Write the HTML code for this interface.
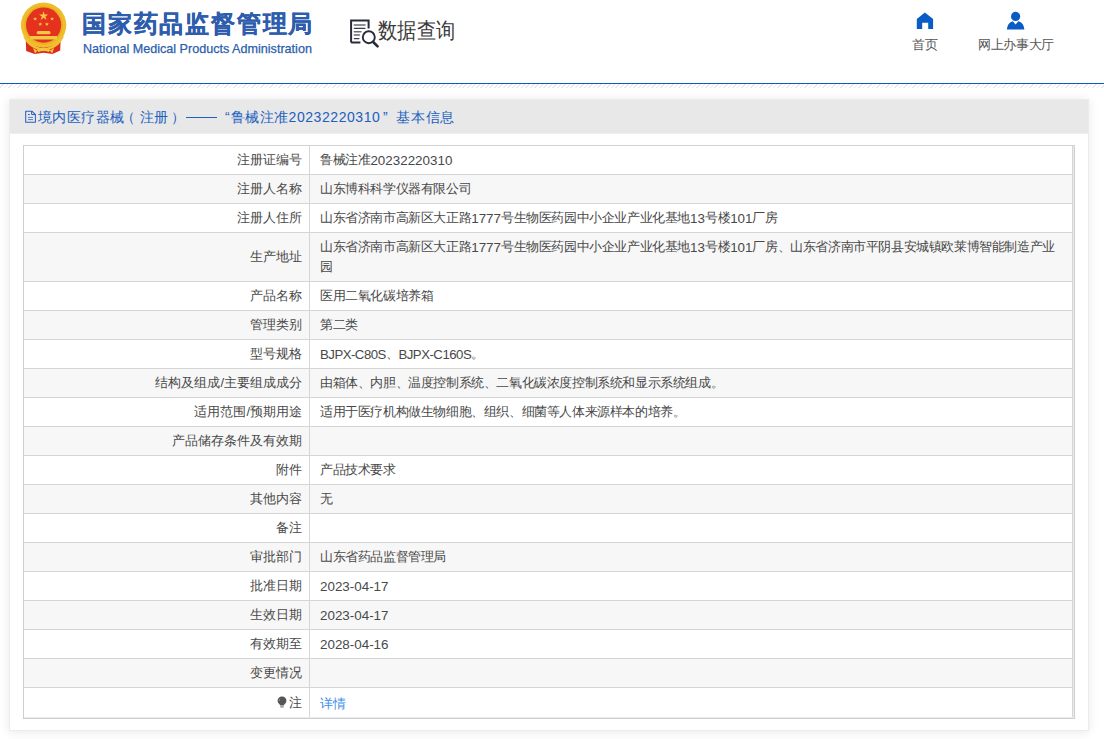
<!DOCTYPE html>
<html><head><meta charset="utf-8">
<style>
*{margin:0;padding:0;box-sizing:border-box}
html,body{width:1104px;height:739px;overflow:hidden;background:#fff;font-family:"Liberation Sans",sans-serif;color:#555}
#hdr{position:absolute;left:0;top:0;width:1104px;height:84px;border-bottom:1px solid #0a5cc2}
#hatch{position:absolute;left:0;top:84px;width:1104px;height:4px;background:repeating-linear-gradient(135deg,#fff 0,#fff 1.9px,#e9e9e9 2.0px,#e9e9e9 3.0px,#fff 3.18px)}
#emb{position:absolute;left:0;top:0;width:80px;height:60px}
#t1{position:absolute;left:82px;top:6.5px;font-size:24px;font-weight:bold;color:#2d5dac;line-height:34px;white-space:nowrap;letter-spacing:1.8px;-webkit-text-stroke:0.25px #2d5dac}
#t2{position:absolute;left:83px;top:42px;font-size:12.6px;color:#2a5eab;-webkit-text-stroke:0.25px #2a5eab;line-height:15px;white-space:nowrap}
#sq{position:absolute;left:350px;top:19px;width:30px;height:30px;overflow:visible}
#sqt{position:absolute;left:378px;top:16px;font-size:22px;color:#3a3a3a;line-height:30px;white-space:nowrap;transform:scaleX(0.875);transform-origin:0 0}
.nav{position:absolute;top:37px;font-size:13px;color:#555;line-height:16px;white-space:nowrap;letter-spacing:-0.35px}
#panel{position:absolute;left:9px;top:99px;width:1080px;height:632px;background:#fff;border:1px solid #ececec;box-shadow:0 1px 10px rgba(0,0,0,0.09)}
#ph{position:absolute;left:0;top:0;width:1078px;height:34px;border-bottom:1px solid #eceef3;background:#e8e8e8;color:#2060c0;font-size:14px;line-height:34px;white-space:nowrap}
#ph span.p{position:absolute;top:0;letter-spacing:0.4px}
#ph b{font-weight:normal;letter-spacing:0.55px}
#doc{position:absolute;left:15px;top:10px;width:12px;height:14px}
#tw{position:absolute;left:13px;top:45px;width:1052px;border:1px solid #cfcfcf;border-top-color:#d2d2d2;padding:0 1px 1px 0;background:#e9ebf1}
table{border-collapse:separate;border-spacing:0;table-layout:fixed;width:1049px;font-size:13px;color:#484848}
td{background:#fff;border-bottom:1px solid #d6d6d6;height:29px;line-height:20px;padding:0 10px 0 10px;letter-spacing:-0.4px;vertical-align:middle;white-space:nowrap}
td.l{width:286px;text-align:right;padding-right:7px;letter-spacing:0;border-right:1px solid #d6d6d6}
td.v{border-right:1px solid #d6d6d6}
tr.g td{background:#f7f7f7}
tr.tall td{height:49px}
tr.last td{height:29px;border-bottom:0}
#light{position:absolute;right:0;top:0;width:1px;height:100%;background:#e9ebf1}
#light2{position:absolute;left:0;bottom:0;width:100%;height:1px;background:#e9ebf1}
span.n{letter-spacing:0;font-size:13.4px;position:relative;top:1px}
span.m{letter-spacing:-0.5px;font-size:13.2px;position:relative;top:1px}
a{color:#3d8eea;text-decoration:none;position:relative;top:1.5px}
</style></head><body>
<div id="hdr">
  <svg id="emb" viewBox="0 0 80 60">
    <circle cx="43.6" cy="25.1" r="22.7" fill="#f0bd2a"/>
    <circle cx="43.6" cy="25.1" r="19.4" fill="#e8b020"/>
    <circle cx="43.6" cy="25.1" r="17.6" fill="#e4321f"/>
    <path d="M43.6 11.2 l1.1 3.3 h3.5 l-2.8 2.1 1.1 3.3 -2.9-2.1 -2.9 2.1 1.1-3.3 -2.8-2.1 h3.5z" fill="#f4c842"/>
    <path d="M35.1 17 l0.6 1.3 h1.4 l-1.1 .9 .4 1.4 -1.3-.8 -1.3 .8 .4-1.4 -1.1-.9 h1.4z" fill="#f4c842"/>
    <path d="M52.1 17 l0.6 1.3 h1.4 l-1.1 .9 .4 1.4 -1.3-.8 -1.3 .8 .4-1.4 -1.1-.9 h1.4z" fill="#f4c842"/>
    <path d="M40.3 22.2 l0.6 1.3 h1.4 l-1.1 .9 .4 1.4 -1.3-.8 -1.3 .8 .4-1.4 -1.1-.9 h1.4z" fill="#f4c842"/>
    <path d="M46.9 22.2 l0.6 1.3 h1.4 l-1.1 .9 .4 1.4 -1.3-.8 -1.3 .8 .4-1.4 -1.1-.9 h1.4z" fill="#f4c842"/>
    <path d="M37.5 31 H49.8 L50.8 33.2 L49.3 34.2 H38 L36.4 33.2 Z M30 35.9 H57.1 V39.5 H30 Z" fill="#f3c845"/>
    <path d="M25.8 40.5 Q34 47.5 43.6 47.5 Q53.2 47.5 60.6 40.5 L60.2 50.6 L52.5 54 L43.6 52.8 L34.6 54 L26.2 51 Z" fill="#dc2b1b"/>
    <path d="M24.5 36 A20.5 20.5 0 0 0 62.7 36" fill="none" stroke="#f0c233" stroke-width="2.6"/>
    <path d="M37 49.5 Q43.6 46 50.2 49.5 L49 52 Q43.6 50 38.2 52 Z M33 48 L37.5 50.5 L35 53.5 Z M54.2 48 L49.7 50.5 L52.2 53.5 Z" fill="#f2c53c"/>
  </svg>
  <div id="t1">国家药品监督管理局</div>
  <div id="t2">National Medical Products Administration</div>
  <svg id="sq" viewBox="0 0 30 30">
    <path d="M1.1 23.6 V1.4 H18.6 V9.4 M1.1 23.6 H10.4" fill="none" stroke="#2a2a3a" stroke-width="2"/>
    <path d="M4.3 6 H15 M4.3 12.7 H11 M4.3 16 H9.4" stroke="#6a6a78" stroke-width="1.6" stroke-linecap="round"/>
    <path d="M4.3 9.3 H15 M4.3 19.6 H9" stroke="#3a3a4a" stroke-width="1.2" stroke-linecap="round"/>
    <circle cx="18.8" cy="18.2" r="6" fill="#fff" stroke="#2a2a3a" stroke-width="1.9"/>
    <path d="M23.2 23 L27.6 27.4" stroke="#2a2a3a" stroke-width="2.6" stroke-linecap="round"/>
  </svg>
  <div id="sqt">数据查询</div>
  <svg style="position:absolute;left:916px;top:12px" width="18" height="18" viewBox="0 0 18 18">
    <path d="M0.8 7 L8.9 0.4 L17.1 7 V17 H12.2 V10.8 H6.2 V17 H0.8 Z" fill="#0a5cc5"/>
  </svg>
  <div class="nav" style="left:912px">首页</div>
  <svg style="position:absolute;left:1006px;top:11px" width="20" height="20" viewBox="0 0 20 20">
    <circle cx="9.6" cy="5.4" r="4.6" fill="#0a5cc5"/>
    <path d="M0.8 18.4 Q1.5 11.5 6.8 10.2 L9.6 13.6 L12.4 10.2 Q17.8 11.5 18.4 18.4 Z" fill="#0a5cc5"/>
  </svg>
  <div class="nav" style="left:978px">网上办事大厅</div>
</div>
<div id="hatch"></div>
<div id="panel">
  <div id="ph">
    <svg id="doc" viewBox="0 0 12 14"><path d="M0.7 1.2 H6.9 L10.4 4.7 V12.2 H0.7 Z" fill="none" stroke="#2560c8" stroke-width="1.05" stroke-linejoin="round"/><path d="M6.6 1.2 V4.5 H10.4" fill="none" stroke="#2560c8" stroke-width="1"/><path d="M3 4.5 H4.8" stroke="#2a5ec0" stroke-width="1"/><path d="M3 7.4 H8 M3 9.6 H8" stroke="#6078c0" stroke-width="1"/></svg>
    <span class="p" style="left:28px">境内医疗器械</span><span class="p" style="left:111px">（</span><span class="p" style="left:130px">注册</span><span class="p" style="left:161px">）</span><i style="position:absolute;left:176px;top:17px;width:31px;height:1px;background:#2060c0"></i><span class="p" style="left:215px">“</span><span class="p" style="left:221px">鲁械注准<b>20232220310</b></span><span class="p" style="left:373px">”</span><span class="p" style="left:386px;letter-spacing:0.8px">基本信息</span>
  </div>
  <div id="tw">
    <table>
      <tr><td class="l">注册证编号</td><td class="v">鲁械注准<span class="n">20232220310</span></td></tr>
      <tr class="g"><td class="l">注册人名称</td><td class="v">山东博科科学仪器有限公司</td></tr>
      <tr><td class="l">注册人住所</td><td class="v">山东省济南市高新区大正路<span class="n">1777</span>号生物医药园中小企业产业化基地<span class="n">13</span>号楼<span class="n">101</span>厂房</td></tr>
      <tr class="g tall"><td class="l">生产地址</td><td class="v">山东省济南市高新区大正路<span class="n">1777</span>号生物医药园中小企业产业化基地<span class="n">13</span>号楼<span class="n">101</span>厂房、山东省济南市平阴县安城镇欧莱博智能制造产业<br>园</td></tr>
      <tr><td class="l">产品名称</td><td class="v">医用二氧化碳培养箱</td></tr>
      <tr class="g"><td class="l">管理类别</td><td class="v">第二类</td></tr>
      <tr><td class="l">型号规格</td><td class="v"><span class="m">BJPX-C80S</span>、<span class="m">BJPX-C160S</span>。</td></tr>
      <tr class="g"><td class="l">结构及组成/主要组成成分</td><td class="v">由箱体、内胆、温度控制系统、二氧化碳浓度控制系统和显示系统组成。</td></tr>
      <tr><td class="l">适用范围/预期用途</td><td class="v">适用于医疗机构做生物细胞、组织、细菌等人体来源样本的培养。</td></tr>
      <tr class="g"><td class="l">产品储存条件及有效期</td><td class="v"></td></tr>
      <tr><td class="l">附件</td><td class="v">产品技术要求</td></tr>
      <tr class="g"><td class="l">其他内容</td><td class="v">无</td></tr>
      <tr><td class="l">备注</td><td class="v"></td></tr>
      <tr class="g"><td class="l">审批部门</td><td class="v">山东省药品监督管理局</td></tr>
      <tr><td class="l">批准日期</td><td class="v"><span class="n">2023-04-17</span></td></tr>
      <tr class="g"><td class="l">生效日期</td><td class="v"><span class="n">2023-04-17</span></td></tr>
      <tr><td class="l">有效期至</td><td class="v"><span class="n">2028-04-16</span></td></tr>
      <tr class="g"><td class="l">变更情况</td><td class="v"></td></tr>
      <tr class="last"><td class="l"><svg width="10" height="12" viewBox="0 0 10 12" style="vertical-align:-1px;margin-right:2px"><path d="M5 0.5 C7.6 0.5 9.4 2.4 9.4 4.8 C9.4 6.6 8.2 7.6 7.3 8.6 L7 9.6 H3 L2.7 8.6 C1.8 7.6 0.6 6.6 0.6 4.8 C0.6 2.4 2.4 0.5 5 0.5 Z" fill="#555"/><rect x="3.3" y="10.3" width="3.4" height="1.2" fill="#777"/><path d="M3 2.5 Q2 3.5 2.2 5" stroke="#999" stroke-width="0.9" fill="none"/></svg>注</td><td class="v"><a>详情</a></td></tr>
    </table>
  </div>
</div>
</body></html>
